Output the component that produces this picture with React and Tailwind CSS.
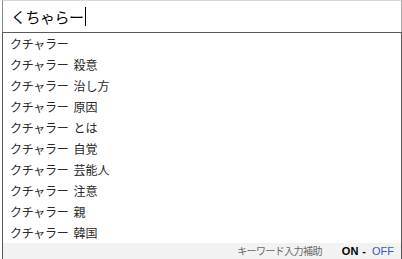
import React from "react";

const items = ["", "殺意", "治し方", "原因", "とは", "自覚", "芸能人", "注意", "親", "韓国"];

export default function App() {
  return (
    <div
      className="w-[402px] h-[259px] bg-white overflow-hidden flex flex-col pl-[2px]"
      style={{ fontFamily: '"Noto Sans CJK JP", "Noto Sans", sans-serif' }}
    >
      <div className="h-[32px] shrink-0 border-l border-t border-r border-l-[#8a8a8a] border-t-[#d8d8d8] border-r-[#a8a8a8] flex items-center pl-[8px]">
        <span className="text-[15px] text-black leading-none tracking-[-0.5px]">くちゃらー</span>
        <span className="w-[1px] h-[19px] bg-black ml-[1px]"></span>
      </div>
      <div className="flex-1 flex flex-col border-t border-l border-r border-[#5a5a5a]">
        {items.map((s, i) => (
          <div key={i} className="h-[21px] shrink-0 flex items-center pl-[7px] text-[12px] text-[#2a2a2a] leading-none">
            <span className="tracking-[-0.3px]">クチャラー</span>
            {s && <span className="ml-[5px]">{s}</span>}
          </div>
        ))}
        <div className="flex-1 bg-[#f2f2f2] flex items-center justify-end pr-[7px] text-[11px] leading-none">
          <span className="text-[#666] text-[10px] tracking-[-0.6px]">キーワード入力補助</span>
          <span className="ml-[20px] font-bold text-black" style={{ fontFamily: '"Liberation Sans", Arial, sans-serif' }}>ON</span>
          <span className="ml-[4px] font-bold text-black" style={{ fontFamily: '"Liberation Sans", Arial, sans-serif' }}>-</span>
          <span className="ml-[6px] text-[#3d55c9]" style={{ fontFamily: '"Liberation Sans", Arial, sans-serif' }}>OFF</span>
        </div>
      </div>
    </div>
  );
}
